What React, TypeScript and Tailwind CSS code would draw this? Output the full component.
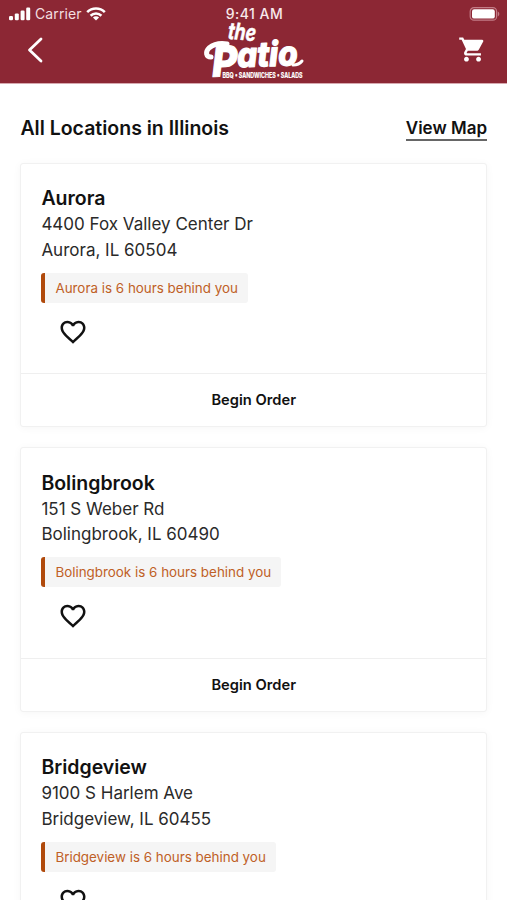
import React from 'react';

type StoreLocation = {
  id: string;
  name: string;
  street: string;
  cityLine: string;
};

const LOCATIONS: StoreLocation[] = [
  { id: 'aurora', name: 'Aurora', street: '4400 Fox Valley Center Dr', cityLine: 'Aurora, IL 60504' },
  { id: 'bolingbrook', name: 'Bolingbrook', street: '151 S Weber Rd', cityLine: 'Bolingbrook, IL 60490' },
  { id: 'bridgeview', name: 'Bridgeview', street: '9100 S Harlem Ave', cityLine: 'Bridgeview, IL 60455' },
];

function SignalIcon() {
  return (
    <svg className="h-[14px] w-[22px]" viewBox="0 0 22 14" fill="currentColor" aria-hidden>
      <rect x="0" y="9" width="4" height="4.2" rx="1.2" />
      <rect x="5.8" y="6.4" width="4" height="6.8" rx="1.2" />
      <rect x="11.6" y="3.5" width="4" height="9.7" rx="1.2" />
      <rect x="17.2" y="0.5" width="4" height="12.7" rx="1.2" />
    </svg>
  );
}

function WifiIcon() {
  return (
    <svg className="h-[14px] w-[20px]" viewBox="0 0 20 14" fill="none" stroke="currentColor" strokeWidth="2.6" aria-hidden>
      <path d="M1.2 5.1a12.4 12.4 0 0 1 17.6 0" />
      <path d="M4.6 8.7a7.7 7.7 0 0 1 10.8 0" />
      <path d="M10 13.6 6.9 10.5a4.4 4.4 0 0 1 6.2 0z" fill="currentColor" stroke="none" />
    </svg>
  );
}

function BatteryIcon() {
  return (
    <svg className="h-[14px] w-[31px]" viewBox="0 0 31 14" aria-hidden>
      <rect x="1.2" y="0.6" width="26.4" height="12.6" rx="3.8" fill="none" stroke="#c27c86" strokeWidth="1.2" />
      <rect x="3" y="2.2" width="22.8" height="9.4" rx="2.2" fill="#fff" />
      <path d="M28.8 4.6c2 .8 2 4 0 4.8z" fill="#c27c86" />
    </svg>
  );
}

function PatioLogo() {
  return (
    <svg
      className="h-[62px] w-[110px] overflow-visible font-['Inter',sans-serif]"
      viewBox="0 0 110 62"
      fill="#fff"
      role="img"
      aria-label="the Patio"
    >
      <g transform="rotate(5 42 14)">
        <text x="28" y="20" fontSize="23" fontWeight="700" fontStyle="italic" textLength="28" lengthAdjust="spacingAndGlyphs" stroke="#fff" strokeWidth="0.5">
          the
        </text>
      </g>
      {/* brush sweep leading into the wordmark */}
      <path
        d="M11 37C6 37 5 32 9 28C14 24 21 23 27 24"
        fill="none"
        stroke="#fff"
        strokeWidth="5"
        strokeLinecap="round"
      />
      <g transform="rotate(-2 60 45)">
        <text
          x="12"
          y="55"
          fontSize="42"
          fontWeight="800"
          fontStyle="italic"
          textLength="86"
          lengthAdjust="spacingAndGlyphs"
          stroke="#fff"
          strokeWidth="1.2"
          strokeLinejoin="round"
        >
          P
          <tspan fontSize="34" dy="-8.5">atio</tspan>
        </text>
      </g>
      <path d="M93 45q6 0 9-4" fill="none" stroke="#fff" strokeWidth="3" strokeLinecap="round" />
      <text x="22.5" y="58.3" fontSize="7.6" fontWeight="700" textLength="80" lengthAdjust="spacingAndGlyphs" stroke="#fff" strokeWidth="0.2">
        BBQ • SANDWICHES • SALADS
      </text>
    </svg>
  );
}

function CartIcon() {
  return (
    <svg className="h-[29px] w-[29px]" viewBox="0 0 24 24" fill="currentColor" aria-hidden>
      <path d="M7 18c-1.1 0-1.99.9-1.99 2S5.9 22 7 22s2-.9 2-2-.9-2-2-2zM1 2v2h2l3.6 7.59-1.35 2.45c-.16.28-.25.61-.25.96 0 1.1.9 2 2 2h12v-2H7.42c-.14 0-.25-.11-.25-.25l.03-.12.9-1.63h7.45c.75 0 1.41-.41 1.75-1.03l3.58-6.49A1 1 0 0 0 20 4H5.21l-.94-2H1zm16 16c-1.1 0-1.99.9-1.99 2s.89 2 1.99 2 2-.9 2-2-.9-2-2-2z" />
    </svg>
  );
}

function HeartIcon() {
  return (
    <svg className="h-[30px] w-[30px]" viewBox="0 0 24 24" fill="currentColor" aria-hidden>
      <path d="M16.5 3c-1.74 0-3.41.81-4.5 2.09C10.91 3.81 9.24 3 7.5 3 4.42 3 2 5.42 2 8.5c0 3.78 3.4 6.86 8.55 11.54L12 21.35l1.45-1.32C18.6 15.36 22 12.28 22 8.5 22 5.42 19.58 3 16.5 3zm-4.4 15.55-.1.1-.1-.1C7.14 14.24 4 11.39 4 8.5 4 6.5 5.5 5 7.5 5c1.54 0 3.04.99 3.57 2.36h1.87C13.46 5.99 14.96 5 16.5 5c2 0 3.5 1.5 3.5 3.5 0 2.89-3.14 5.74-7.9 10.05z" />
    </svg>
  );
}

function Header() {
  return (
    <header className="h-[84px] border-b border-[#d7a9af] bg-[#8c2734] text-white">
      <div className="grid h-[27px] grid-cols-3 items-center pl-[9px] pr-[7px]">
        <div className="flex items-center gap-1">
          <SignalIcon />
          <span className="text-[14px] leading-5 tracking-[0.1px] text-[#f3dfe1]">Carrier</span>
          <WifiIcon />
        </div>
        <span className="text-center text-[14px] font-medium leading-5 tracking-[0.5px] text-[#f8e9eb]">9:41 AM</span>
        <div className="flex justify-end">
          <BatteryIcon />
        </div>
      </div>
      <div className="flex items-start justify-between pl-[27px] pr-5">
        <button type="button" aria-label="Back" className="mt-[9px]">
          <svg className="h-[28px] w-[17px]" viewBox="0 0 17 28" fill="none" stroke="currentColor" strokeWidth="2.8" strokeLinecap="round" strokeLinejoin="round">
            <path d="M14 3 2.5 14 14 25" />
          </svg>
        </button>
        <div className="-mt-[7px] ml-[8px]">
          <PatioLogo />
        </div>
        <button type="button" aria-label="Cart" className="mt-2">
          <CartIcon />
        </button>
      </div>
    </header>
  );
}

function LocationCard({ location }: { location: StoreLocation }) {
  return (
    <article className="flex h-[264.6px] flex-col rounded-[3px] border border-[#f1f1f1] bg-white shadow-[0_1px_8px_rgba(0,0,0,0.04)]">
      <div className="flex-1 px-5 pt-[20.6px]">
        <h2 className="text-[19.5px] font-semibold leading-7">{location.name}</h2>
        <p className="text-[17px] leading-[25.6px] text-[#2a2a2a]">{location.street}</p>
        <p className="text-[17px] leading-[25.6px] text-[#2a2a2a]">{location.cityLine}</p>
        <div className="mt-[9.4px] flex">
          <span className="h-[30px] rounded-[3px] border-l-4 border-[#b04a0c] bg-[#f5f5f5] px-[10px] text-[13.4px] leading-[30px] text-[#bf6026]">
            {location.name} is 6 hours behind you
          </span>
        </div>
        <button type="button" aria-label="Favorite" className="ml-[16.5px] mt-[14px] block">
          <HeartIcon />
        </button>
      </div>
      <button type="button" className="h-[53px] border-t border-[#efefef] text-[14.7px] font-semibold">
        Begin Order
      </button>
    </article>
  );
}

export default function App() {
  return (
    <div className="h-[900px] overflow-hidden bg-white font-['Inter',sans-serif] text-[#111111]">
      <Header />
      <main className="pl-[20.4px] pr-[20px] pt-[30.5px]">
        <div className="flex h-[28px] items-center justify-between">
          <h1 className="text-[19.5px] font-semibold">All Locations in Illinois</h1>
          <a href="#map" className="border-b-2 border-[#666666] text-[17px] font-semibold leading-[22px]">
            View Map
          </a>
        </div>
        <div className="mt-5 flex flex-col gap-5">
          {LOCATIONS.map((location) => (
            <LocationCard key={location.id} location={location} />
          ))}
        </div>
      </main>
    </div>
  );
}
